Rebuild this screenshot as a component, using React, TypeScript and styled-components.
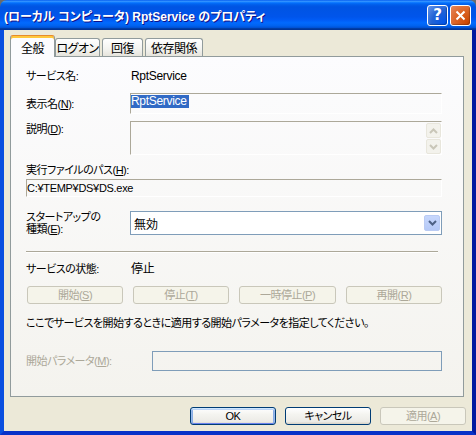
import styled, { createGlobalStyle } from "styled-components";

const GlobalStyle = createGlobalStyle`
  html, body {
    margin: 0;
    padding: 0;
    background: #6b6b6b;
  }
  body {
    font-family: "Liberation Sans", "Noto Sans CJK JP", sans-serif;
    font-size: 11px;
    color: #000;
    font-feature-settings: "palt";
  }
  #root {
    width: 476px;
    height: 435px;
  }
`;

const Window = styled.div`
  width: 476px;
  height: 435px;
  display: flex;
  flex-direction: column;
  overflow: hidden;
  border-radius: 7px 7px 0 0;
`;

const TitleBar = styled.div`
  height: 30px;
  flex: none;
  display: flex;
  align-items: center;
  gap: 2px;
  padding: 0 5px 0 4px;
  color: #fff;
  font-weight: bold;
  font-size: 12px;
  text-shadow: 1px 1px #0f1089;
  background: linear-gradient(
    180deg,
    #0058ee 0%,
    #3593ff 4%,
    #288eff 6%,
    #127dff 8%,
    #036ffc 10%,
    #0262ee 14%,
    #0057e5 20%,
    #0054e3 24%,
    #0055eb 56%,
    #005bf5 66%,
    #026afe 76%,
    #0062ef 86%,
    #0052d6 92%,
    #0040ab 94%,
    #003092 100%
  );
`;

const Title = styled.span`
  flex: 1;
  white-space: nowrap;
`;

const CaptionButton = styled.div<{ $close?: boolean }>`
  width: 21px;
  height: 21px;
  box-sizing: border-box;
  border: 1px solid #fff;
  border-radius: 3px;
  display: flex;
  align-items: center;
  justify-content: center;
  font-family: "DejaVu Sans", sans-serif;
  font-size: 15px;
  text-shadow: none;
  background: ${(p) =>
    p.$close
      ? "radial-gradient(circle at 90% 90%, #cc4600 0%, #dc6527 55%, #e5875c 100%)"
      : "radial-gradient(circle at 90% 90%, #0054e9 0%, #2263d5 55%, #6696eb 100%)"};
  box-shadow: inset -1px -1px 1px rgba(0, 0, 0, 0.25);
`;

const Frame = styled.div`
  flex: 1;
  display: flex;
  flex-direction: column;
  background: #ece9d8;
  border-left: 4px solid #0a4fe0;
  border-right: 4px solid #0019a0;
  border-bottom: 4px solid #0831c8;
  padding: 5px 6px 0 6px;
`;

const TabRow = styled.div`
  display: flex;
  align-items: flex-end;
  height: 21px;
  position: relative;
  z-index: 1;
`;

const Tab = styled.div<{ $active?: boolean; $w: number }>`
  width: ${(p) => p.$w}px;
  box-sizing: border-box;
  display: flex;
  align-items: center;
  justify-content: center;
  white-space: nowrap;
  font-size: 12px;
  letter-spacing: -0.5px;
  border: 1px solid #919b9c;
  border-bottom: none;
  border-radius: 3px 3px 0 0;
  height: ${(p) => (p.$active ? 22 : 18)}px;
  margin-bottom: ${(p) => (p.$active ? -1 : 0)}px;
  margin-right: ${(p) => (p.$active ? 0 : 2)}px;
  padding-top: ${(p) => (p.$active ? 1 : 0)}px;
  background: ${(p) =>
    p.$active ? "#fcfcfe" : "linear-gradient(180deg, #fff 0%, #f3f3ef 60%, #e6e4dc 100%)"};
  box-shadow: ${(p) => (p.$active ? "inset 0 2px #ffc83c, inset 0 1px #e68b2c" : "none")};
  border-top-color: ${(p) => (p.$active ? "#e68b2c" : "#919b9c")};
`;

const Panel = styled.div`
  width: 454px;
  height: 341px;
  box-sizing: border-box;
  border: 1px solid #919b9c;
  background: linear-gradient(180deg, #fcfcfe 0%, #f4f3ee 100%);
  padding: 11px 0 0 15px;
  display: flex;
  flex-direction: column;
`;

const Row = styled.div<{ $mt: number; $h: number; $cols?: string }>`
  display: grid;
  grid-template-columns: ${(p) => p.$cols ?? "104px 312px"};
  margin-top: ${(p) => p.$mt}px;
  height: ${(p) => p.$h}px;
  align-items: center;
`;

const Label = styled.div<{ $disabled?: boolean; $top?: boolean }>`
  align-self: ${(p) => (p.$top ? "start" : "center")};
  padding-top: ${(p) => (p.$top ? 2 : 0)}px;
  line-height: 12px;
  letter-spacing: -0.5px;
  color: ${(p) => (p.$disabled ? "#aca899" : "#000")};
  white-space: nowrap;
`;

const Value = styled.div`
  padding-left: 1px;
  line-height: 12px;
  font-size: 12px;
  letter-spacing: -0.3px;
`;

const Sunken = styled.div<{ $wide?: boolean }>`
  height: 100%;
  box-sizing: border-box;
  border-top: 1px solid #aca899;
  border-left: 1px solid #aca899;
  border-right: 1px solid #fff;
  border-bottom: 1px solid #fff;
  display: flex;
  align-items: flex-start;
  justify-content: space-between;
  grid-column: ${(p) => (p.$wide ? "1 / 3" : "2")};
`;

const Selected = styled.span`
  margin-top: 1px;
  background: #316ac5;
  color: #fff;
  font-size: 12px;
  letter-spacing: -0.3px;
  line-height: 13px;
  padding: 0 2px 0 0;
`;

const PathText = styled.span`
  margin: 2px 0 0 0;
  line-height: 13px;
  letter-spacing: -0.3px;
`;

const ScrollCol = styled.div`
  display: flex;
  flex-direction: column;
  gap: 1px;
  margin: 1px 0 0 0;
`;

const ScrollBtn = styled.div`
  width: 15px;
  height: 15px;
  box-sizing: border-box;
  border: 1px solid #e8e6dc;
  border-radius: 2px;
  background: #f3f2ec;
  display: flex;
  align-items: center;
  justify-content: center;
`;

const Select = styled.div`
  grid-column: 2;
  height: 100%;
  box-sizing: border-box;
  border: 1px solid #7f9db9;
  background: #fff;
  display: flex;
  align-items: center;
  justify-content: space-between;
  padding: 0 1px 0 3px;
  font-size: 12px;
`;

const DropButton = styled.div`
  width: 16px;
  height: 16px;
  box-sizing: border-box;
  border: 1px solid #bacbf3;
  border-radius: 2px;
  background: linear-gradient(180deg, #c7d7fc 0%, #b5c9f7 100%);
  display: flex;
  align-items: center;
  justify-content: center;
`;

const TwoLine = styled.div`
  align-self: start;
  line-height: 12px;
  letter-spacing: -0.5px;
  white-space: nowrap;
`;

const Separator = styled.div`
  margin-top: 20px;
  width: 412px;
  height: 0;
  border-top: 1px solid #aca899;
  border-bottom: 1px solid #fff;
`;

const ButtonRow = styled.div`
  margin-top: 9px;
  width: 415px;
  margin-left: 1px;
  display: flex;
  justify-content: space-between;
`;

const XPButton = styled.div<{ $disabled?: boolean; $default?: boolean; $w: number }>`
  width: ${(p) => p.$w}px;
  height: 18px;
  box-sizing: border-box;
  border-radius: 3px;
  display: flex;
  align-items: center;
  justify-content: center;
  line-height: 12px;
  letter-spacing: -0.5px;
  white-space: nowrap;
  border: 1px solid ${(p) => (p.$disabled ? "#c9c7ba" : "#003c74")};
  color: ${(p) => (p.$disabled ? "#aca899" : "#000")};
  background: ${(p) =>
    p.$disabled
      ? "#f5f4ea"
      : "linear-gradient(180deg, #fff 0%, #f4f4f0 40%, #ecebe6 85%, #d6d0c5 100%)"};
  box-shadow: ${(p) =>
    p.$default
      ? "inset 0 1px #cee7ff, inset 1px 0 #98b8ea, inset -1px 0 #98b8ea, inset 0 -1px #6982ee, inset 0 2px #bcd4f6, inset -2px 0 #89ade4, inset 2px 0 #89ade4"
      : "none"};
`;

const Hint = styled.div`
  margin-top: 11px;
  height: 16px;
  line-height: 16px;
  letter-spacing: -0.5px;
  white-space: nowrap;
`;

const TextInput = styled.div`
  grid-column: 2;
  height: 100%;
  box-sizing: border-box;
  border: 1px solid #7f9db9;
`;

const Footer = styled.div`
  margin-top: 10px;
  display: flex;
  justify-content: flex-end;
  gap: 9px;
`;

const U = styled.span`
  text-decoration: underline;
  text-underline-offset: 1px;
`;

const Chevron = ({ color, up }: { color: string; up?: boolean }) => (
  <svg width="9" height="6" viewBox="0 0 9 6">
    <path
      d={up ? "M1 5 L4.5 1.5 L8 5" : "M1 1 L4.5 4.5 L8 1"}
      stroke={color}
      strokeWidth="2"
      fill="none"
    />
  </svg>
);

const App = () => {
  return (
    <>
      <GlobalStyle />
      <Window>
        <TitleBar>
          <Title>(ローカル コンピュータ) RptService のプロパティ</Title>
          <CaptionButton>?</CaptionButton>
          <CaptionButton $close>
            <svg width="11" height="11" viewBox="0 0 11 11">
              <path d="M1.5 1.5 L9.5 9.5 M9.5 1.5 L1.5 9.5" stroke="#fff" strokeWidth="2" />
            </svg>
          </CaptionButton>
        </TitleBar>
        <Frame>
          <TabRow>
            <Tab $active $w={45}>全般</Tab>
            <Tab $w={45}>ログオン</Tab>
            <Tab $w={41}>回復</Tab>
            <Tab $w={58}>依存関係</Tab>
          </TabRow>
          <Panel>
            <Row $mt={0} $h={16}>
              <Label>サービス名:</Label>
              <Value>RptService</Value>
            </Row>
            <Row $mt={9} $h={21}>
              <Label>
                表示名(<U>N</U>):
              </Label>
              <Sunken>
                <Selected>RptService</Selected>
              </Sunken>
            </Row>
            <Row $mt={7} $h={33}>
              <Label $top>
                説明(<U>D</U>):
              </Label>
              <Sunken>
                <span />
                <ScrollCol>
                  <ScrollBtn>
                    <Chevron color="#c9c6b8" up />
                  </ScrollBtn>
                  <ScrollBtn>
                    <Chevron color="#c9c6b8" />
                  </ScrollBtn>
                </ScrollCol>
              </Sunken>
            </Row>
            <Row $mt={9} $h={14}>
              <Label>
                実行ファイルのパス(<U>H</U>):
              </Label>
            </Row>
            <Row $mt={2} $h={18}>
              <Sunken $wide>
                <PathText>C:¥TEMP¥DS¥DS.exe</PathText>
              </Sunken>
            </Row>
            <Row $mt={14} $h={20}>
              <TwoLine>
                スタートアップの
                <br />
                種類(<U>E</U>):
              </TwoLine>
              <Select>
                <span>無効</span>
                <DropButton>
                  <Chevron color="#4d6185" />
                </DropButton>
              </Select>
            </Row>
            <Separator />
            <Row $mt={8} $h={16}>
              <Label>サービスの状態:</Label>
              <Value>停止</Value>
            </Row>
            <ButtonRow>
              <XPButton $disabled $w={96}>
                開始(<U>S</U>)
              </XPButton>
              <XPButton $disabled $w={96}>
                停止(<U>T</U>)
              </XPButton>
              <XPButton $disabled $w={97}>
                一時停止(<U>P</U>)
              </XPButton>
              <XPButton $disabled $w={96}>
                再開(<U>R</U>)
              </XPButton>
            </ButtonRow>
            <Hint>ここでサービスを開始するときに適用する開始パラメータを指定してください。</Hint>
            <Row $mt={20} $h={20} $cols="126px 290px">
              <Label $disabled>
                開始パラメータ(<U>M</U>):
              </Label>
              <TextInput />
            </Row>
          </Panel>
          <Footer>
            <XPButton $default $w={86}>
              OK
            </XPButton>
            <XPButton $w={86}>キャンセル</XPButton>
            <XPButton $disabled $w={86}>
              適用(<U>A</U>)
            </XPButton>
          </Footer>
        </Frame>
      </Window>
    </>
  );
};

export default App;
